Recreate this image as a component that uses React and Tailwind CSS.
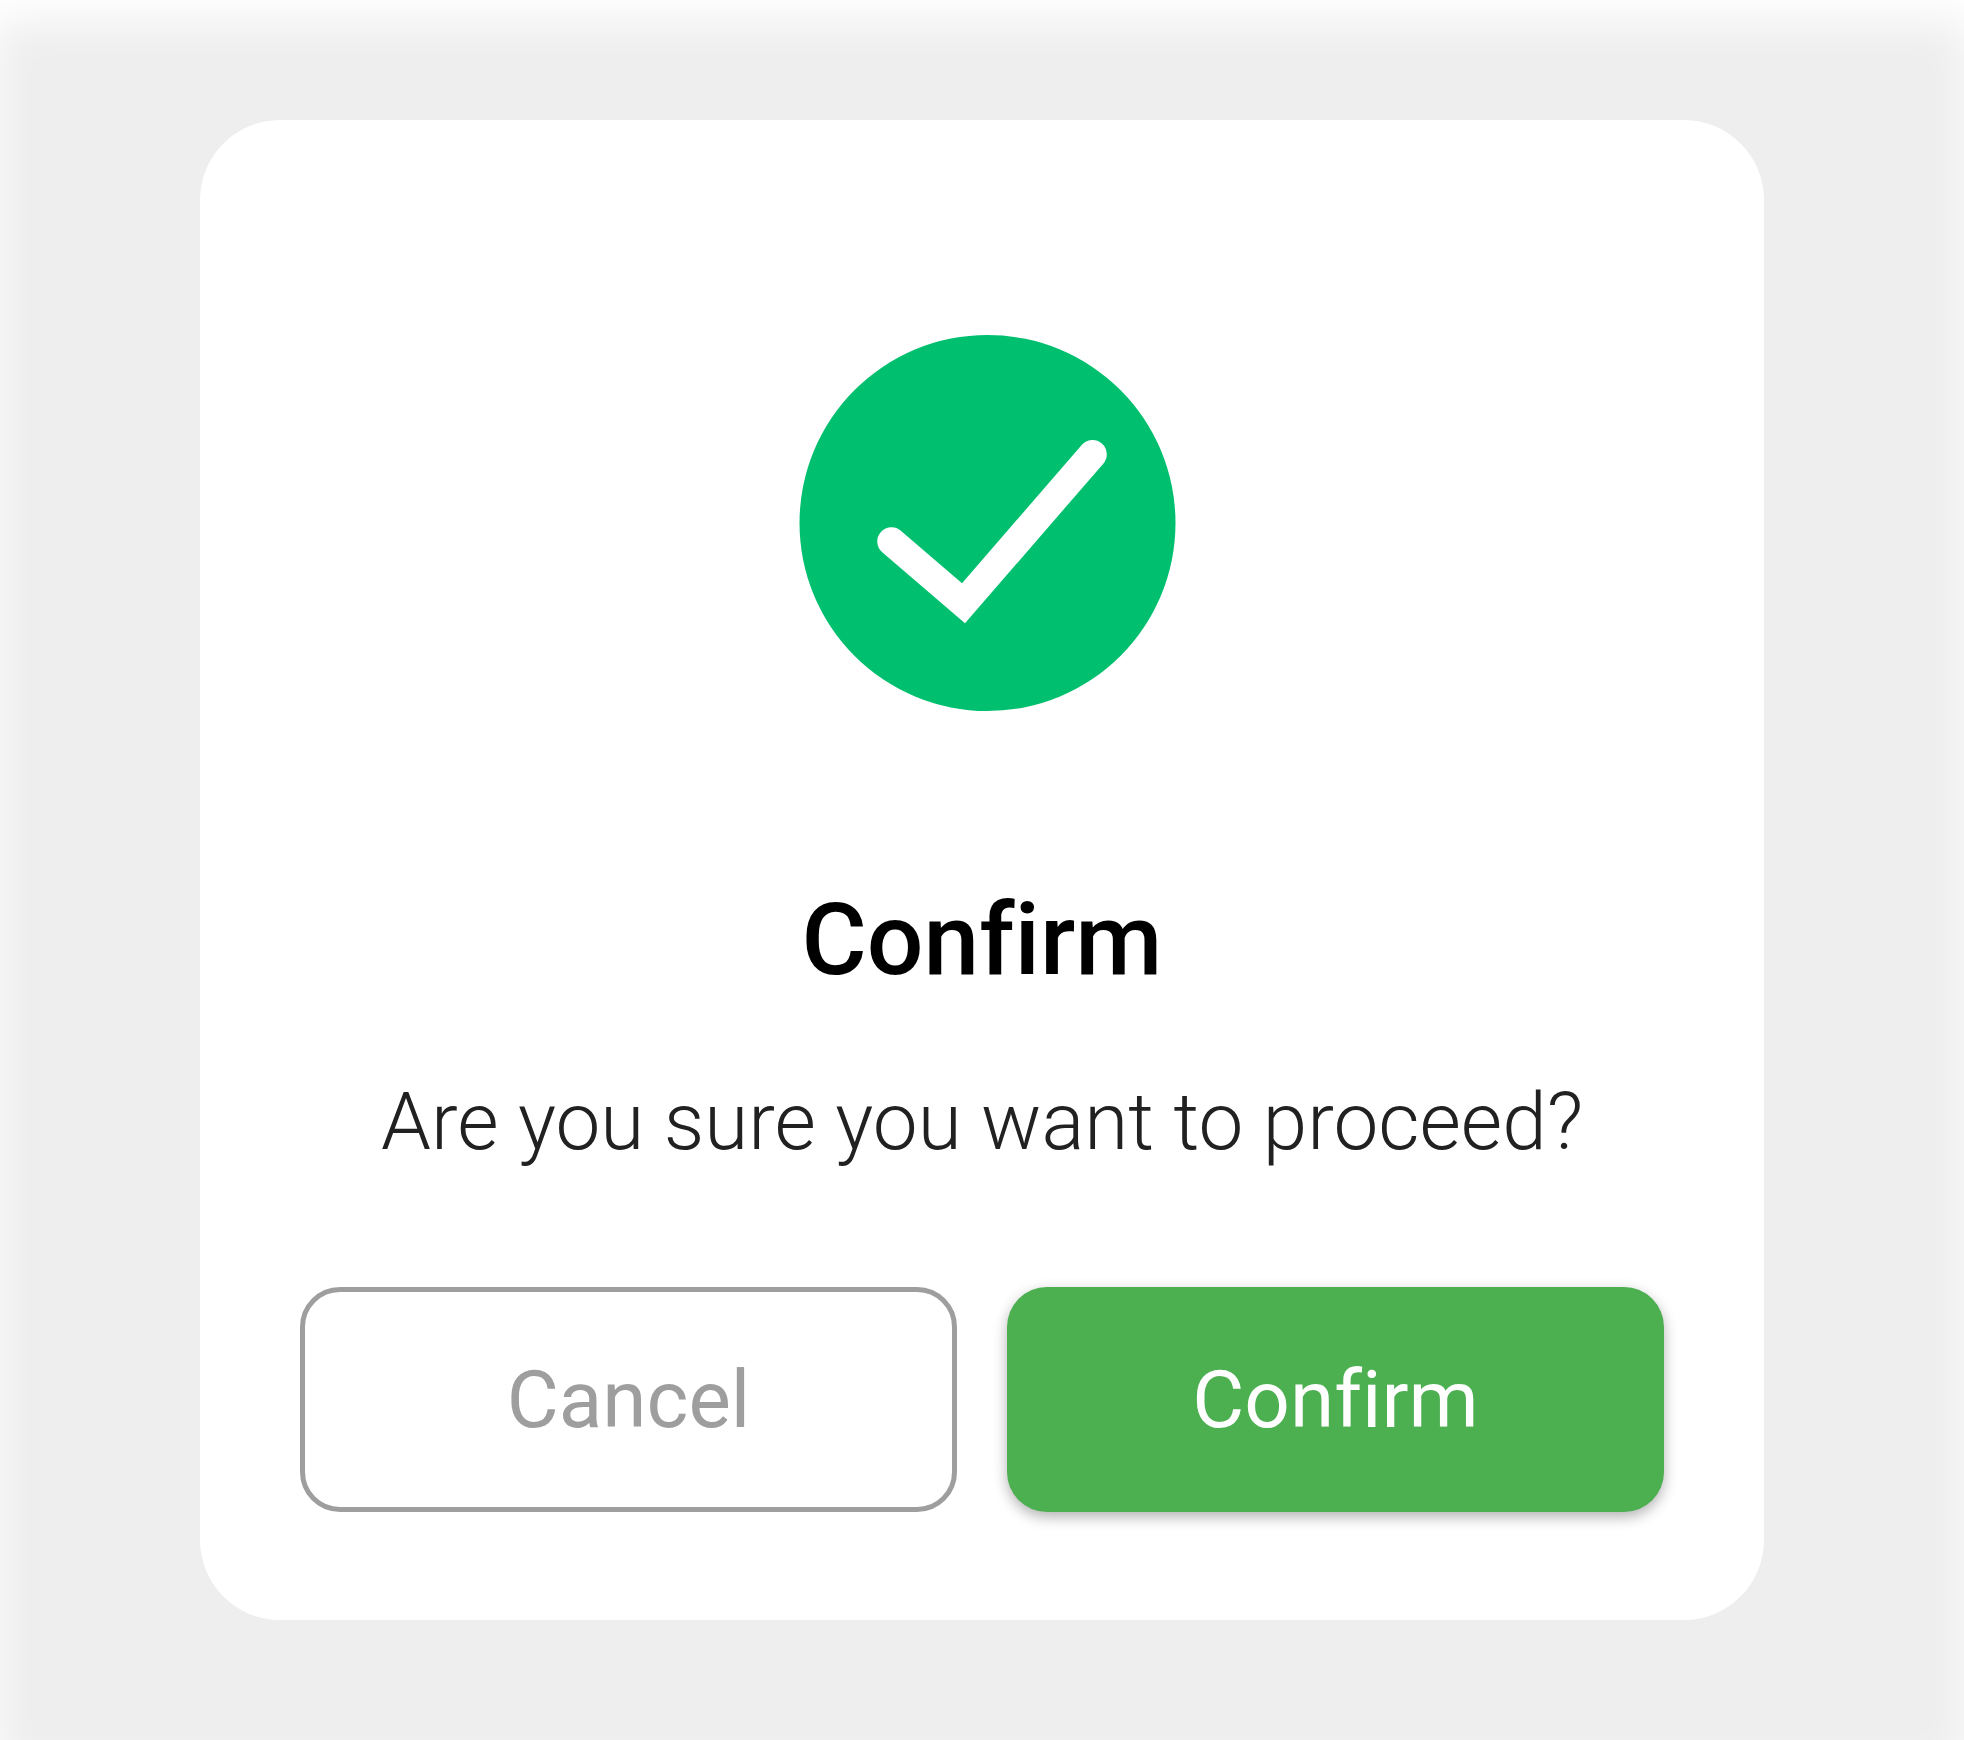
function SuccessIcon() {
  return (
    <svg viewBox="0 0 388 376" className="h-[376px] w-[388px]" fill="none" aria-hidden="true">
      <circle cx="199.5" cy="188" r="188" fill="#00c06f" />
      <path
        d="M103.5 206.5 L175.5 268.3 L304.5 119.3"
        stroke="#fff"
        strokeWidth="28.5"
        strokeLinecap="round"
        strokeLinejoin="miter"
      />
    </svg>
  );
}

export default function App() {
  return (
    <main className="flex min-h-screen flex-col bg-[#eeeeee] px-[200px] py-[120px] font-['Roboto',sans-serif] shadow-[inset_0_25px_45px_-5px_#fff] [font-variant-ligatures:none]">
      <section
        role="dialog"
        aria-labelledby="dialog-title"
        aria-describedby="dialog-message"
        className="flex flex-col items-center rounded-[80px] bg-white px-[100px] pt-[215px] pb-[108px]"
      >
        <SuccessIcon />
        <h1 id="dialog-title" className="mt-[169px] text-[100px] leading-[120px] font-medium text-black">
          Confirm
        </h1>
        <p id="dialog-message" className="mt-[72px] text-center text-[80px] leading-[100px] font-light text-[#212121]">
          Are you sure you want to proceed?
        </p>
        <div className="mt-[115px] grid w-full grid-cols-2 gap-[50px]">
          <button
            type="button"
            className="h-[225px] rounded-[40px] border-[5px] border-[#9e9e9e] bg-white text-[80px] text-[#9e9e9e]"
          >
            Cancel
          </button>
          <button
            type="button"
            className="h-[225px] rounded-[40px] bg-[#4caf50] text-[80px] text-white shadow-[0_5px_14px_rgba(0,0,0,0.3)]"
          >
            Confirm
          </button>
        </div>
      </section>
    </main>
  );
}
